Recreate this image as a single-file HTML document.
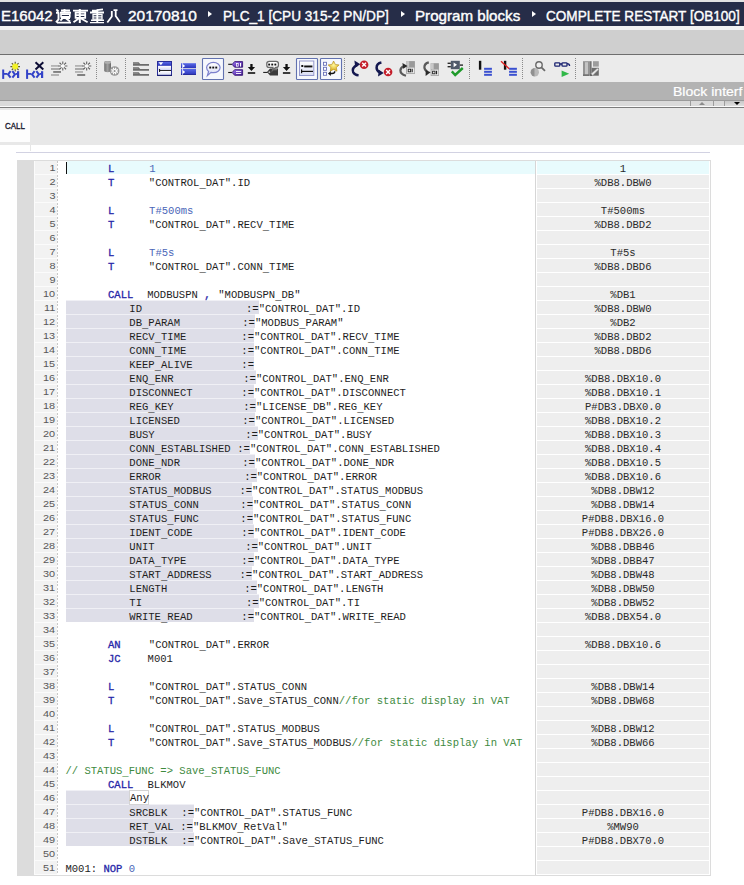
<!DOCTYPE html>
<html><head><meta charset="utf-8">
<style>
*{margin:0;padding:0;box-sizing:border-box}
html,body{width:744px;height:885px;overflow:hidden;background:#fff;position:relative;font-family:"Liberation Sans",sans-serif}
.abs{position:absolute}
#topstrip{position:absolute;left:0;top:0;width:744px;height:2px;background:#e2e2e2}
#title{position:absolute;left:0;top:2px;width:744px;height:24px;background:#262d48;color:#fff}
#title .s{position:absolute;top:5px;font-size:15px;line-height:17px;white-space:pre;transform-origin:0 50%;-webkit-text-stroke:0.4px #fff}
#title .tri{position:absolute;top:9.2px;width:0;height:0;border-top:3.7px solid transparent;border-bottom:3.7px solid transparent;border-left:4.4px solid #fff}
#wstrip{position:absolute;left:0;top:26px;width:744px;height:4px;background:#f2f2f2}
#gbar{position:absolute;left:0;top:30px;width:744px;height:24px;background:#cfcfcf}
#gline{position:absolute;left:0;top:54px;width:744px;height:1px;background:#6e6e6e}
#tb{position:absolute;left:0;top:55px;width:744px;height:27px;background:#ebebeb}
#bibar{position:absolute;left:0;top:82px;width:744px;height:18px;background:#b3b3b3}
#bibar .s{position:absolute;left:673px;top:1px;font-size:13px;line-height:17px;color:#fff;white-space:pre;transform:scaleX(1.08);transform-origin:0 50%;-webkit-text-stroke:0.2px #fff}
#biline{position:absolute;left:0;top:100px;width:744px;height:1px;background:#9a9a9a}
#arrstrip{position:absolute;left:0;top:101px;width:744px;height:5px;background:#dadada}
#wl2{position:absolute;left:0;top:106px;width:744px;height:1px;background:#fafafa}
#dl2{position:absolute;left:0;top:107px;width:744px;height:1px;background:#7c7c7c}
#callarea{position:absolute;left:0;top:108px;width:744px;height:37px;background:#e8e8e8}
#callbox{position:absolute;left:0;top:110px;width:30px;height:32px;background:#fdfdfd}
#callbox span{position:absolute;left:4.8px;top:10.8px;font-size:8.6px;line-height:10px;color:#1c1c30;transform:scaleX(0.92);transform-origin:0 50%;-webkit-text-stroke:0.35px #1c1c30}
#vl1{position:absolute;left:30px;top:145px;width:1px;height:6px;background:#e6e6e6}
#lav{position:absolute;left:16px;top:152px;width:694px;height:1px;background:#d2d2e2}
#ed{position:absolute;left:17px;top:160px;width:694px;height:716px;background:#fff;border:1px solid #dcdcdc}
#gutter{position:absolute;left:17px;top:160px;width:17px;height:716px;background:#dcdcdc}
#lncol{position:absolute;left:34px;top:161px;width:23px;height:714px;background:#fbfbfb}
#dots{position:absolute;left:57px;top:161px;width:1px;height:714px;background:repeating-linear-gradient(to bottom,#c8c8c8 0 2px,transparent 2px 3px,#c8c8c8 3px 5px,transparent 5px 7px)}
#vsep{position:absolute;left:535px;top:161px;width:1px;height:714px;background:#d6d6d6}
.ln{position:absolute;left:34px;width:23px;height:13px;background:#f2f2f2;border-left:1px solid #fbfbfb;font-size:9.9px;line-height:13px;text-align:right;padding-right:1.8px;padding-top:0px;color:#585858}
.ln span{display:inline-block;transform:scaleX(1.1);transform-origin:100% 50%}
.vc{position:absolute;left:537px;width:172px;height:13px;background:#eeeeee;font-family:"Liberation Mono",monospace;font-size:10.55px;line-height:13px;text-align:center;color:#2a2a2a;white-space:pre;padding-top:2px}
.vc.cur{background:#e8fbfd}
#curline{position:absolute;left:67px;top:161px;width:468px;height:13px;background:#e8fbfd}
#caret{position:absolute;left:66px;top:162px;width:1px;height:12px;background:#111}
.band{position:absolute;left:66px;height:14px;background:linear-gradient(#f0f0f5 0 1px,#dedee8 1px)}
.any{position:absolute;left:129px;width:20px;height:15px;background:#fff;border:1px solid #d4d4d4;font-family:"Liberation Mono",monospace;font-size:10.55px;line-height:13px;color:#1a1a1a;padding-left:0px;padding-top:1px}
.t{position:absolute;font-family:"Liberation Mono",monospace;font-size:10.55px;line-height:14px;white-space:pre}
.op{color:#2626a8;-webkit-text-stroke:0.3px #2626a8}
.cst{color:#4a66b8}
.tx{color:#1e1e1e}
.cm{color:#3e8a3e}
.t i{font-style:normal;position:relative;top:2px}
.sep{position:absolute;top:60px;width:1px;height:19px;background:repeating-linear-gradient(to bottom,#a0a0a0 0 1px,transparent 1px 2px)}
.ic{position:absolute;top:58px}
</style></head><body>
<div id="topstrip"></div>
<div id="title">
<div class="s" style="left:1px">E16042</div>
<svg class="abs" style="left:0;top:-2px" width="130" height="26" viewBox="0 0 130 26" fill="none" stroke="#fff" stroke-linecap="butt">
<g stroke-width="1.9">
<path d="M56.3 9.3l2.2 2.2M56 12.8h3.2M58.5 12.8v6.5l-2.5 3M57 22.6h14"/>
<path d="M61 10.5h9M64.5 9v3.5M60 12.7h11M63 17.6l-2.6 3M61 18h9M65.5 18l4.5 3.5"/>
</g>
<rect x="61" y="14.2" width="8.8" height="2.6" stroke-width="1.6"/>
<g stroke-width="1.8">
<path d="M73 10.6h15M75.6 12.6h9.6v5.2h-9.6zM75.6 15.2h9.6M79 18.3l-5.5 4M80.6 18.3l7 4"/>
<path d="M79.8 9v14" stroke-width="2"/>
<path d="M92 10.7h5M97 10.2l6-0.9M90 12.5h14"/>
<path d="M91 20.3h13M90 22.6h14" stroke-width="1.4"/>
<path d="M93 14.5h9v4.6h-9zM93 16.8h9" stroke-width="1.3"/>
<path d="M97.3 9.5v13" stroke-width="1.9"/>
<path d="M111.8 11v5.5l-4.5 6M113.5 10.2h4M115.7 10v6l4.3 6"/>
</g>
</svg>
<div class="s" style="left:128px;transform:scaleX(1.03)">20170810</div>
<div class="tri" style="left:208px"></div>
<div class="s" id="t2" style="left:222.7px;transform:scaleX(0.908)">PLC_1 [CPU 315-2 PN/DP]</div>
<div class="tri" style="left:400.5px"></div>
<div class="s" id="t3" style="left:414.8px;transform:scaleX(1.01)">Program blocks</div>
<div class="tri" style="left:532px"></div>
<div class="s" id="t4" style="left:546px;transform:scaleX(0.904)">COMPLETE RESTART [OB100]</div>
</div>
<div id="wstrip"></div>
<div id="gbar"></div>
<div id="gline"></div>
<div id="tb"></div>
<svg class="abs" style="left:0;top:0" width="744" height="82" viewBox="0 0 744 82">
<defs>
<linearGradient id="gblue" x1="0" y1="0" x2="0" y2="1"><stop offset="0" stop-color="#5a6ae8"/><stop offset="1" stop-color="#2a34b8"/></linearGradient>
<linearGradient id="gcyl" x1="0" y1="0" x2="1" y2="0"><stop offset="0" stop-color="#707070"/><stop offset="0.5" stop-color="#a0a0a0"/><stop offset="1" stop-color="#686868"/></linearGradient>
<linearGradient id="gpanel" x1="0" y1="0" x2="0" y2="1"><stop offset="0" stop-color="#ffffff"/><stop offset="1" stop-color="#d8dcf4"/></linearGradient>
<radialGradient id="gstar" cx="0.5" cy="0.4" r="0.6"><stop offset="0" stop-color="#fff8a0"/><stop offset="1" stop-color="#d8a810"/></radialGradient>
</defs>
<!-- separators -->
<g fill="#8a8a8a">
<path d="M96 58h1v1h-1zM96 60h1v1h-1zM96 62h1v1h-1zM96 64h1v1h-1zM96 66h1v1h-1zM96 68h1v1h-1zM96 70h1v1h-1zM96 72h1v1h-1zM96 74h1v1h-1zM96 76h1v1h-1zM96 78h1v1h-1z"/>
<path d="M125 58h1v1h-1zM125 60h1v1h-1zM125 62h1v1h-1zM125 64h1v1h-1zM125 66h1v1h-1zM125 68h1v1h-1zM125 70h1v1h-1zM125 72h1v1h-1zM125 74h1v1h-1zM125 76h1v1h-1zM125 78h1v1h-1z"/>
<path d="M344 58h1v1h-1zM344 60h1v1h-1zM344 62h1v1h-1zM344 64h1v1h-1zM344 66h1v1h-1zM344 68h1v1h-1zM344 70h1v1h-1zM344 72h1v1h-1zM344 74h1v1h-1zM344 76h1v1h-1zM344 78h1v1h-1z"/>
<path d="M469 58h1v1h-1zM469 60h1v1h-1zM469 62h1v1h-1zM469 64h1v1h-1zM469 66h1v1h-1zM469 68h1v1h-1zM469 70h1v1h-1zM469 72h1v1h-1zM469 74h1v1h-1zM469 76h1v1h-1zM469 78h1v1h-1z"/>
<path d="M522 58h1v1h-1zM522 60h1v1h-1zM522 62h1v1h-1zM522 64h1v1h-1zM522 66h1v1h-1zM522 68h1v1h-1zM522 70h1v1h-1zM522 72h1v1h-1zM522 74h1v1h-1zM522 76h1v1h-1zM522 78h1v1h-1z"/>
<path d="M575 58h1v1h-1zM575 60h1v1h-1zM575 62h1v1h-1zM575 64h1v1h-1zM575 66h1v1h-1zM575 68h1v1h-1zM575 70h1v1h-1zM575 72h1v1h-1zM575 74h1v1h-1zM575 76h1v1h-1zM575 78h1v1h-1z"/>
</g>
<!-- 1: insert network -->
<g fill="#3242c8">
<rect x="2.2" y="69.5" width="2" height="9.4"/><rect x="4" y="73" width="3.4" height="1.8"/>
<path d="M10.6 71.2L8.1 74.4L10.6 77.6M12.4 71.2L14.9 74.4L12.4 77.6" fill="none" stroke="#3242c8" stroke-width="2"/>
<rect x="15.6" y="73" width="1.6" height="1.8"/><rect x="17" y="71.2" width="2.2" height="6.8"/>
</g>
<g stroke="#5a5a28" stroke-width="1.1"><path d="M15.2 61.8v9.6M10.4 66.6h9.6M11.8 63.2l6.8 6.8M18.6 63.2l-6.8 6.8"/></g>
<circle cx="15.2" cy="66.6" r="3" fill="#f2f226"/>
<!-- 2: delete network -->
<g fill="#3242c8">
<rect x="26.1" y="69.5" width="2" height="9.4"/><rect x="28" y="73" width="3.4" height="1.8"/>
<path d="M34.6 71.2L32.1 74.4L34.6 77.6M36.4 71.2L38.9 74.4L36.4 77.6" fill="none" stroke="#3242c8" stroke-width="2"/>
<rect x="39.6" y="73" width="1.6" height="1.8"/><rect x="41" y="71.2" width="2.2" height="6.8"/>
</g>
<path d="M35.5 62.3l7.8 7.2M43.3 62.3l-7.8 7.2" stroke="#0c0c34" stroke-width="2"/>
<!-- 3,4: grey bars with sparkle -->
<g>
<rect x="51" y="65" width="7.5" height="1.8" fill="#b4b4b4"/><rect x="51" y="68" width="9" height="2" fill="#aaaaaa"/>
<rect x="53.2" y="71" width="7.8" height="1.9" fill="#808080"/><rect x="51" y="74" width="8" height="2" fill="#b4b4b4"/>
<circle cx="62.8" cy="66" r="3.6" fill="#fafafa"/><path d="M64.60 66.00L67.40 66.00M64.07 67.27L66.05 69.25M62.80 67.80L62.80 70.60M61.53 67.27L59.55 69.25M61.00 66.00L58.20 66.00M61.53 64.73L59.55 62.75M62.80 64.20L62.80 61.40M64.07 64.73L66.05 62.75" stroke="#5e5e5e" stroke-width="1.1"/>
<rect x="75" y="65" width="7.5" height="1.8" fill="#b4b4b4"/><rect x="75" y="68" width="9" height="2" fill="#aaaaaa"/>
<rect x="75" y="71" width="8" height="1.9" fill="#b4b4b4"/><rect x="77.2" y="74" width="8" height="2" fill="#808080"/>
<circle cx="86.7" cy="66" r="3.6" fill="#fafafa"/><path d="M88.50 66.00L91.30 66.00M87.97 67.27L89.95 69.25M86.70 67.80L86.70 70.60M85.43 67.27L83.45 69.25M84.90 66.00L82.10 66.00M85.43 64.73L83.45 62.75M86.70 64.20L86.70 61.40M87.97 64.73L89.95 62.75" stroke="#5e5e5e" stroke-width="1.1"/>
</g>
<!-- 5: cylinder with gear -->
<path d="M104.2 62.5a3.4 1.4 0 0 1 6.8 0v8.3a3.4 1.4 0 0 1 -6.8 0z" fill="url(#gcyl)"/>
<ellipse cx="107.6" cy="62.5" rx="3.4" ry="1.3" fill="#b0b0b0"/>
<circle cx="114.6" cy="71" r="4.8" fill="#969696"/>
<path d="M115.52 71.38L117.93 72.38M114.98 71.92L115.98 74.33M114.22 71.92L113.22 74.33M113.68 71.38L111.27 72.38M113.68 70.62L111.27 69.62M114.22 70.08L113.22 67.67M114.98 70.08L115.98 67.67M115.52 70.62L117.93 69.62" stroke="#fff" stroke-width="1.1"/>
<!-- 6: stacked tab bars -->
<g fill="#6c6c6c">
<path d="M133 62.2h5.6l1.6 1.9h8.8v1.6h-16z"/>
<path d="M133 67.2h5.6l1.6 1.9h8.8v1.6h-16z"/>
<path d="M133 72.2h5.6l1.6 1.9h8.8v1.6h-16z"/>
</g>
<g fill="#8c8c8c"><rect x="133" y="62.2" width="5.4" height="1.6"/><rect x="133" y="67.2" width="5.4" height="1.6"/><rect x="133" y="72.2" width="5.4" height="1.6"/></g>
<!-- 7: blue box with line -->
<rect x="157.5" y="61.5" width="14" height="14" fill="#eef0fc" stroke="#2a2e98" stroke-width="1"/>
<rect x="158" y="62" width="13" height="3.8" fill="url(#gblue)"/>
<path d="M158.6 62.3h4.6l-2.3 2.9z" fill="#fff"/>
<rect x="158" y="66" width="13" height="3.4" fill="url(#gpanel)"/>
<rect x="158" y="71" width="13" height="4" fill="url(#gpanel)"/>
<rect x="158" y="69.4" width="13" height="0.6" fill="#c8ccf0"/>
<rect x="159.6" y="70.1" width="11.4" height="0.9" fill="#111"/><rect x="159.1" y="69" width="1" height="3" fill="#111"/>
<rect x="157.5" y="74.8" width="14.5" height="1.2" fill="#1c2070"/>
<!-- 8: blue double bars -->
<rect x="181" y="63.2" width="15" height="5" fill="url(#gblue)"/>
<rect x="181" y="69" width="15" height="5.8" fill="url(#gblue)"/>
<rect x="181" y="74" width="15" height="0.8" fill="#1e2290"/>
<rect x="182.2" y="63.2" width="0.8" height="11.6" fill="#e8ecff"/>
<path d="M183 64.2l2.2 1.7-2.2 1.7zM183 70.3l2.2 1.7-2.2 1.7z" fill="#fff"/>
<!-- 9: comment (selected) -->
<rect x="202.5" y="58.5" width="21" height="21" rx="0.8" fill="#f6f8fd" stroke="#6272b0" stroke-width="1.1"/>
<path d="M213.4 62.4c3.8 0 6.7 2.3 6.7 5.2s-2.9 5.1-6.7 5.1c-0.8 0-1.6-0.1-2.4-0.3l-3.6 3.2 1.2-4.1c-1.3-1-2-2.3-2-3.9 0-2.9 3-5.2 6.8-5.2z" fill="url(#gpanel)" stroke="#7c80cc" stroke-width="1.2"/>
<g fill="#111"><rect x="209.3" y="66.6" width="1.9" height="1.9"/><rect x="212.3" y="66.6" width="1.9" height="1.9"/><rect x="215.3" y="66.6" width="1.9" height="1.9"/></g>
<!-- 10: purple tags -->
<defs><linearGradient id="gpur" x1="0" y1="0" x2="1" y2="1"><stop offset="0" stop-color="#a080f0"/><stop offset="0.6" stop-color="#6438b8"/><stop offset="1" stop-color="#3a1a80"/></linearGradient></defs>
<g>
<path d="M228.2 64.3h4" stroke="#111" stroke-width="1.1"/>
<path d="M234.6 61.6h8v5.6h-8l-2.4-2.8z" fill="url(#gpur)" stroke="#3a1876" stroke-width="0.9"/>
<rect x="236" y="63" width="2.6" height="3.6" fill="#fff"/><rect x="236.8" y="63.8" width="1" height="2" fill="#5a30a8"/>
<rect x="240" y="63" width="1.1" height="3.6" fill="#fff"/>
<path d="M228.2 72.5h4" stroke="#111" stroke-width="1.1"/>
<path d="M234.6 69.7h8v5.6h-8l-2.4-2.8z" fill="url(#gpur)" stroke="#3a1876" stroke-width="0.9"/>
<rect x="236" y="71.1" width="5.2" height="0.9" fill="#fff"/><rect x="236" y="73" width="5.2" height="0.9" fill="#fff"/>
</g>
<!-- download arrows -->
<g fill="#111">
<path d="M250.3 64h2.3v3h2.5l-3.65 3.9-3.65-3.9h2.5z"/><rect x="247.8" y="72.2" width="7.4" height="1.6"/>
<path d="M285.4 64h2.3v3h2.5l-3.65 3.9-3.65-3.9h2.5z"/><rect x="282.9" y="72.2" width="7.4" height="1.6"/>
</g>
<!-- 11: black bubble + tag -->
<path d="M263.2 72.4h4.6" stroke="#111" stroke-width="1"/>
<path d="M270 68.6h8v7h-8l-3-3.5z" fill="#3a3a3a"/>
<rect x="273.5" y="69.3" width="3.6" height="0.9" fill="#8a8a8a"/>
<circle cx="269.4" cy="72.2" r="0.9" fill="#c0c0c0"/>
<path d="M269.4 61.4h6.6c1.5 0 2.4 0.9 2.4 2.2v1.6c0 1.3-0.9 2.2-2.4 2.2h-0.4l-3.2 3.1 0.6-3.1h-3.6c-1.5 0-2.6-0.9-2.6-2.2v-1.6c0-1.3 1.1-2.2 2.6-2.2z" fill="#fff" stroke="#6a6a6a" stroke-width="1.3"/>
<g fill="#111"><rect x="268.2" y="63.6" width="1.9" height="1.9"/><rect x="271.3" y="63.6" width="1.9" height="1.9"/><rect x="274.4" y="63.6" width="1.9" height="1.9"/></g>
<!-- 12: list (selected) -->
<rect x="296.5" y="58.5" width="21" height="21" rx="0.8" fill="#f6f8fd" stroke="#6272b0" stroke-width="1.1"/>
<rect x="299.5" y="61" width="14.3" height="14.5" fill="url(#gpanel)" stroke="#9498cc" stroke-width="1"/>
<rect x="301.3" y="65" width="2" height="2" fill="#111"/><rect x="304.2" y="65.5" width="8.2" height="1.9" fill="#111"/>
<rect x="301.6" y="70.8" width="11.4" height="1.2" fill="#111"/><rect x="301" y="69.4" width="1.2" height="3.8" fill="#111"/>
<!-- 13: star list (selected) -->
<rect x="320.5" y="58.5" width="21" height="21" rx="0.8" fill="#f6f8fd" stroke="#6272b0" stroke-width="1.1"/>
<g fill="#fff" stroke="#6870b8" stroke-width="0.9"><rect x="323.5" y="62.3" width="3" height="3"/><rect x="323.5" y="67.3" width="3" height="3"/><rect x="323.5" y="72.3" width="3" height="3"/></g>
<path d="M333.6 61l1.7 3.4 3.8 0.5-2.75 2.6 0.65 3.7-3.4-1.8-3.4 1.8 0.65-3.7-2.75-2.6 3.8-0.5z" fill="url(#gstar)" stroke="#b08818" stroke-width="0.6"/>
<path d="M334.8 71.2c0 1.6-1 2.3-2.8 2.3h-2" fill="none" stroke="#111" stroke-width="1.4"/>
<path d="M328 73.5l2.8-2.4v4.8z" fill="#111"/>
<!-- 14,15: navy arrows with red x -->
<path d="M357.4 64.8C353.6 66.6 352.2 69.6 353.2 72.2C354 74 355.8 75 358.6 75.4" fill="none" stroke="#141850" stroke-width="2.4"/>
<path d="M354.4 60.6l6 3.6-5.2 3.4z" fill="#141850"/>
<circle cx="364.1" cy="64.7" r="4.3" fill="#c41e2a"/>
<path d="M362.2 62.8l3.8 3.8M366 62.8l-3.8 3.8" stroke="#fff" stroke-width="1.4"/>
<path d="M381.4 62.6c-3 0.6-4.8 2.8-4.8 5.2 0 2 1.2 3.6 3.2 4.6" fill="none" stroke="#141850" stroke-width="2.5"/>
<path d="M378 76.5l5.8-3.6-5-3.2z" fill="#141850"/>
<circle cx="388.1" cy="72" r="4.3" fill="#c41e2a"/>
<path d="M386.2 70.1l3.8 3.8M390 70.1l-3.8 3.8" stroke="#fff" stroke-width="1.4"/>
<!-- 16,17: grey arrows with page -->
<rect x="406.2" y="61.1" width="8.7" height="12.8" fill="#9a9a9a"/>
<rect x="406.2" y="61.1" width="3" height="6" fill="#c8c8c8"/>
<rect x="407" y="67.6" width="7.3" height="5.6" fill="#e8e8e8"/>
<rect x="408.2" y="69.2" width="2.4" height="2.6" fill="none" stroke="#222" stroke-width="0.9"/><rect x="411.6" y="68.8" width="1.1" height="3.4" fill="#222"/>
<path d="M404.2 66c-2.4 1-3.8 2.6-3.8 4.6 0 2.3 1.8 4.2 5.6 5.2" fill="none" stroke="#5a5a5a" stroke-width="2.2"/>
<path d="M402.4 63l5.2 3-4.4 2.8z" fill="#2a2a2a"/>
<rect x="430.7" y="63.2" width="8.2" height="12.7" fill="#9a9a9a"/>
<rect x="430.7" y="63.2" width="3" height="6" fill="#c8c8c8"/>
<rect x="431.5" y="69.6" width="6.8" height="5.6" fill="#e8e8e8"/>
<rect x="432.6" y="71.2" width="2.4" height="2.6" fill="none" stroke="#222" stroke-width="0.9"/><rect x="436" y="70.8" width="1.1" height="3.4" fill="#222"/>
<path d="M428.8 62.4c-2.8 0.7-4.4 2.6-4.4 4.8 0 1.8 1 3.2 2.8 4.2" fill="none" stroke="#5a5a5a" stroke-width="2.2"/>
<path d="M425.6 76l5-3.8-5-2.2z" fill="#2a2a2a"/>
<!-- 18: block with check -->
<rect x="450.8" y="60.8" width="9" height="8.4" fill="#505a6a"/>
<rect x="447.6" y="62.6" width="3.2" height="1.4" fill="#2a2a2a"/><rect x="447.6" y="66" width="3.2" height="1.4" fill="#2a2a2a"/>
<rect x="459.8" y="64.4" width="3.2" height="1.4" fill="#2a2a2a"/>
<path d="M453.6 62.4l3.4 2.4-3.4 2.4z" fill="#fff"/>
<path d="M451.8 71.4l3.4 3.6 7.6-7" fill="none" stroke="#1e9a2a" stroke-width="2.4"/>
<!-- 19, 20: bar + blue lines -->
<rect x="478.9" y="60.8" width="2.4" height="8.9" fill="#111"/>
<g fill="#3a50d0"><rect x="484.1" y="67.8" width="7.8" height="2"/><rect x="484.1" y="70.8" width="7.8" height="2"/><rect x="484.1" y="73.8" width="7.8" height="2"/></g>
<rect x="503.9" y="60.8" width="2.4" height="8.9" fill="#111"/>
<g fill="#3a50d0"><rect x="509.1" y="67.8" width="7.8" height="2"/><rect x="509.1" y="70.8" width="7.8" height="2"/><rect x="509.1" y="73.8" width="7.8" height="2"/></g>
<path d="M501 61.2l8.2 7.6" stroke="#e02020" stroke-width="1.3"/>
<!-- 21: magnifier -->
<path d="M534.8 68a4.2 4.2 0 0 0 0 8.4z" fill="#909090"/>
<path d="M534.8 68a4.2 4.2 0 0 1 0 8.4z" fill="#b8b8b8"/>
<circle cx="539" cy="65" r="3.2" fill="#f0f0f0" stroke="#6a6a6a" stroke-width="1.4"/>
<path d="M541.4 67.4l3.6 3.4" stroke="#6a6a6a" stroke-width="1.8"/>
<!-- 22: glasses + green arrow -->
<g fill="none" stroke="#1a2270" stroke-width="1.3"><rect x="554.8" y="62.8" width="5" height="3.4" rx="0.8"/><rect x="562" y="62.8" width="5" height="3.4" rx="0.8"/><path d="M559.8 64h2.2M567 63.6c1.8 0 2.6 1 2.6 2.4"/></g>
<path d="M561.6 70.5l7.6 3.2-7.6 3.3z" fill="#30b848"/>
<!-- 23: grey block with pencil -->
<rect x="583" y="61.2" width="6.4" height="14.5" fill="#939393"/>
<rect x="585" y="62.2" width="3" height="12.2" fill="#c4c4c4"/>
<rect x="583" y="74.6" width="6.4" height="1.1" fill="#5a5a5a"/>
<rect x="589.4" y="61.2" width="2.2" height="14.5" fill="#727272"/>
<rect x="593" y="61.2" width="5.8" height="5.4" fill="#9c9c9c"/>
<path d="M591.6 67.8h7.2v7.9h-7.2z" fill="#6c6c6c"/>
<path d="M597.4 68.2l1.4 1.4-5.8 5.6-2.6 0.6 0.8-2.4z" fill="#e6e6e6" stroke="#888" stroke-width="0.5"/>
<rect x="590.4" y="74.4" width="1.3" height="1.3" fill="#222"/>
</svg>

<div id="bibar"><span class="s">Block interf</span></div>
<div id="biline"></div>
<div id="arrstrip">
<div class="abs" style="left:690px;top:0;width:1px;height:5px;background:#9c9c9c"></div>
<div class="abs" style="left:699px;top:1px;width:0;height:0;border-left:3.5px solid transparent;border-right:3.5px solid transparent;border-bottom:3px solid #8c8c8c"></div>
<div class="abs" style="left:713px;top:0;width:1px;height:5px;background:#9c9c9c"></div>
<div class="abs" style="left:724px;top:0;width:1px;height:5px;background:#9c9c9c"></div>
<div class="abs" style="left:725px;top:0;width:19px;height:5px;background:linear-gradient(#c8c8c8,#dedede)"></div>
<div class="abs" style="left:733.5px;top:1px;width:0;height:0;border-left:3px solid transparent;border-right:3px solid transparent;border-top:3.6px solid #000"></div>
</div>
<div id="wl2"></div>
<div id="dl2"></div>
<div id="callarea"></div>
<div id="callbox"><span>CALL</span></div>
<div id="vl1"></div>
<div id="lav"></div>
<div id="ed"></div>
<div id="gutter"></div>
<div id="lncol"></div>
<div id="dots"></div>
<div id="vsep"></div>
<div id="curline"></div>
<div class="ln" style="top:161px"><span>1</span></div>
<div class="vc cur" style="top:161px">1</div>
<div class="ln" style="top:175px"><span>2</span></div>
<div class="vc" style="top:175px">%DB8.DBW0</div>
<div class="ln" style="top:189px"><span>3</span></div>
<div class="vc" style="top:189px"></div>
<div class="ln" style="top:203px"><span>4</span></div>
<div class="vc" style="top:203px">T#500ms</div>
<div class="ln" style="top:217px"><span>5</span></div>
<div class="vc" style="top:217px">%DB8.DBD2</div>
<div class="ln" style="top:231px"><span>6</span></div>
<div class="vc" style="top:231px"></div>
<div class="ln" style="top:245px"><span>7</span></div>
<div class="vc" style="top:245px">T#5s</div>
<div class="ln" style="top:259px"><span>8</span></div>
<div class="vc" style="top:259px">%DB8.DBD6</div>
<div class="ln" style="top:273px"><span>9</span></div>
<div class="vc" style="top:273px"></div>
<div class="ln" style="top:287px"><span>10</span></div>
<div class="vc" style="top:287px">%DB1</div>
<div class="ln" style="top:301px"><span>11</span></div>
<div class="vc" style="top:301px">%DB8.DBW0</div>
<div class="ln" style="top:315px"><span>12</span></div>
<div class="vc" style="top:315px">%DB2</div>
<div class="ln" style="top:329px"><span>13</span></div>
<div class="vc" style="top:329px">%DB8.DBD2</div>
<div class="ln" style="top:343px"><span>14</span></div>
<div class="vc" style="top:343px">%DB8.DBD6</div>
<div class="ln" style="top:357px"><span>15</span></div>
<div class="vc" style="top:357px"></div>
<div class="ln" style="top:371px"><span>16</span></div>
<div class="vc" style="top:371px">%DB8.DBX10.0</div>
<div class="ln" style="top:385px"><span>17</span></div>
<div class="vc" style="top:385px">%DB8.DBX10.1</div>
<div class="ln" style="top:399px"><span>18</span></div>
<div class="vc" style="top:399px">P#DB3.DBX0.0</div>
<div class="ln" style="top:413px"><span>19</span></div>
<div class="vc" style="top:413px">%DB8.DBX10.2</div>
<div class="ln" style="top:427px"><span>20</span></div>
<div class="vc" style="top:427px">%DB8.DBX10.3</div>
<div class="ln" style="top:441px"><span>21</span></div>
<div class="vc" style="top:441px">%DB8.DBX10.4</div>
<div class="ln" style="top:455px"><span>22</span></div>
<div class="vc" style="top:455px">%DB8.DBX10.5</div>
<div class="ln" style="top:469px"><span>23</span></div>
<div class="vc" style="top:469px">%DB8.DBX10.6</div>
<div class="ln" style="top:483px"><span>24</span></div>
<div class="vc" style="top:483px">%DB8.DBW12</div>
<div class="ln" style="top:497px"><span>25</span></div>
<div class="vc" style="top:497px">%DB8.DBW14</div>
<div class="ln" style="top:511px"><span>26</span></div>
<div class="vc" style="top:511px">P#DB8.DBX16.0</div>
<div class="ln" style="top:525px"><span>27</span></div>
<div class="vc" style="top:525px">P#DB8.DBX26.0</div>
<div class="ln" style="top:539px"><span>28</span></div>
<div class="vc" style="top:539px">%DB8.DBB46</div>
<div class="ln" style="top:553px"><span>29</span></div>
<div class="vc" style="top:553px">%DB8.DBB47</div>
<div class="ln" style="top:567px"><span>30</span></div>
<div class="vc" style="top:567px">%DB8.DBW48</div>
<div class="ln" style="top:581px"><span>31</span></div>
<div class="vc" style="top:581px">%DB8.DBW50</div>
<div class="ln" style="top:595px"><span>32</span></div>
<div class="vc" style="top:595px">%DB8.DBW52</div>
<div class="ln" style="top:609px"><span>33</span></div>
<div class="vc" style="top:609px">%DB8.DBX54.0</div>
<div class="ln" style="top:623px"><span>34</span></div>
<div class="vc" style="top:623px"></div>
<div class="ln" style="top:637px"><span>35</span></div>
<div class="vc" style="top:637px">%DB8.DBX10.6</div>
<div class="ln" style="top:651px"><span>36</span></div>
<div class="vc" style="top:651px"></div>
<div class="ln" style="top:665px"><span>37</span></div>
<div class="vc" style="top:665px"></div>
<div class="ln" style="top:679px"><span>38</span></div>
<div class="vc" style="top:679px">%DB8.DBW14</div>
<div class="ln" style="top:693px"><span>39</span></div>
<div class="vc" style="top:693px">%DB8.DBW68</div>
<div class="ln" style="top:707px"><span>40</span></div>
<div class="vc" style="top:707px"></div>
<div class="ln" style="top:721px"><span>41</span></div>
<div class="vc" style="top:721px">%DB8.DBW12</div>
<div class="ln" style="top:735px"><span>42</span></div>
<div class="vc" style="top:735px">%DB8.DBW66</div>
<div class="ln" style="top:749px"><span>43</span></div>
<div class="vc" style="top:749px"></div>
<div class="ln" style="top:763px"><span>44</span></div>
<div class="vc" style="top:763px"></div>
<div class="ln" style="top:777px"><span>45</span></div>
<div class="vc" style="top:777px"></div>
<div class="ln" style="top:791px"><span>46</span></div>
<div class="vc" style="top:791px"></div>
<div class="ln" style="top:805px"><span>47</span></div>
<div class="vc" style="top:805px">P#DB8.DBX16.0</div>
<div class="ln" style="top:819px"><span>48</span></div>
<div class="vc" style="top:819px">%MW90</div>
<div class="ln" style="top:833px"><span>49</span></div>
<div class="vc" style="top:833px">P#DB8.DBX70.0</div>
<div class="ln" style="top:847px"><span>50</span></div>
<div class="vc" style="top:847px"></div>
<div class="ln" style="top:861px"><span>51</span></div>
<div class="vc" style="top:861px"></div>
<div class="band" style="top:300px;width:192.7px"></div>
<div class="band" style="top:314px;width:188.9px"></div>
<div class="band" style="top:328px;width:188.0px"></div>
<div class="band" style="top:342px;width:188.0px"></div>
<div class="band" style="top:356px;width:188.0px"></div>
<div class="band" style="top:370px;width:189.9px"></div>
<div class="band" style="top:384px;width:188.0px"></div>
<div class="band" style="top:398px;width:189.9px"></div>
<div class="band" style="top:412px;width:188.9px"></div>
<div class="band" style="top:426px;width:191.8px"></div>
<div class="band" style="top:440px;width:183.9px"></div>
<div class="band" style="top:454px;width:188.9px"></div>
<div class="band" style="top:468px;width:190.8px"></div>
<div class="band" style="top:482px;width:186.1px"></div>
<div class="band" style="top:496px;width:187.0px"></div>
<div class="band" style="top:510px;width:187.0px"></div>
<div class="band" style="top:524px;width:188.0px"></div>
<div class="band" style="top:538px;width:191.8px"></div>
<div class="band" style="top:552px;width:188.0px"></div>
<div class="band" style="top:566px;width:186.1px"></div>
<div class="band" style="top:580px;width:190.8px"></div>
<div class="band" style="top:594px;width:192.7px"></div>
<div class="band" style="top:608px;width:188.0px"></div>
<div class="band" style="top:804px;width:128.0px"></div>
<div class="band" style="top:818px;width:126.9px"></div>
<div class="band" style="top:832px;width:128.0px"></div>
<div class="band" style="top:790px;width:63.3px"></div>
<div class="any" style="top:790px">Any</div>
<div class="t" style="left:108.00px;top:162px"><span class="op">L</span></div>
<div class="t" style="left:149.30px;top:162px"><span class="cst">1</span></div>
<div class="t" style="left:108.00px;top:176px"><span class="op">T</span></div>
<div class="t" style="left:148.80px;top:176px"><span class="tx">&quot;CONTROL<i>_</i>DAT&quot;.ID</span></div>
<div class="t" style="left:108.00px;top:204px"><span class="op">L</span></div>
<div class="t" style="left:149.10px;top:204px"><span class="cst">T#500ms</span></div>
<div class="t" style="left:108.00px;top:218px"><span class="op">T</span></div>
<div class="t" style="left:148.80px;top:218px"><span class="tx">&quot;CONTROL<i>_</i>DAT&quot;.RECV<i>_</i>TIME</span></div>
<div class="t" style="left:108.00px;top:246px"><span class="op">L</span></div>
<div class="t" style="left:149.10px;top:246px"><span class="cst">T#5s</span></div>
<div class="t" style="left:108.00px;top:260px"><span class="op">T</span></div>
<div class="t" style="left:148.80px;top:260px"><span class="tx">&quot;CONTROL<i>_</i>DAT&quot;.CONN<i>_</i>TIME</span></div>
<div class="t" style="left:108.00px;top:288px"><span class="op">CALL</span></div>
<div class="t" style="left:147.20px;top:288px"><span class="tx">MODBUSPN</span><span class="op"> , </span></div>
<div class="t" style="left:218.22px;top:288px"><span class="tx">&quot;MODBUSPN<i>_</i>DB&quot;</span></div>
<div class="t" style="left:129.30px;top:302px"><span class="tx">ID</span></div>
<div class="t" style="left:246.04px;top:302px"><span class="tx">:=&quot;CONTROL<i>_</i>DAT&quot;.ID</span></div>
<div class="t" style="left:129.30px;top:316px"><span class="tx">DB<i>_</i>PARAM</span></div>
<div class="t" style="left:242.24px;top:316px"><span class="tx">:=&quot;MODBUS<i>_</i>PARAM&quot;</span></div>
<div class="t" style="left:129.30px;top:330px"><span class="tx">RECV<i>_</i>TIME</span></div>
<div class="t" style="left:241.34px;top:330px"><span class="tx">:=&quot;CONTROL<i>_</i>DAT&quot;.RECV<i>_</i>TIME</span></div>
<div class="t" style="left:129.30px;top:344px"><span class="tx">CONN<i>_</i>TIME</span></div>
<div class="t" style="left:241.34px;top:344px"><span class="tx">:=&quot;CONTROL<i>_</i>DAT&quot;.CONN<i>_</i>TIME</span></div>
<div class="t" style="left:129.30px;top:358px"><span class="tx">KEEP<i>_</i>ALIVE</span></div>
<div class="t" style="left:241.34px;top:358px"><span class="tx">:=</span></div>
<div class="t" style="left:129.30px;top:372px"><span class="tx">ENQ<i>_</i>ENR</span></div>
<div class="t" style="left:243.24px;top:372px"><span class="tx">:=&quot;CONTROL<i>_</i>DAT&quot;.ENQ<i>_</i>ENR</span></div>
<div class="t" style="left:129.30px;top:386px"><span class="tx">DISCONNECT</span></div>
<div class="t" style="left:241.34px;top:386px"><span class="tx">:=&quot;CONTROL<i>_</i>DAT&quot;.DISCONNECT</span></div>
<div class="t" style="left:129.30px;top:400px"><span class="tx">REG<i>_</i>KEY</span></div>
<div class="t" style="left:243.24px;top:400px"><span class="tx">:=&quot;LICENSE<i>_</i>DB&quot;.REG<i>_</i>KEY</span></div>
<div class="t" style="left:129.30px;top:414px"><span class="tx">LICENSED</span></div>
<div class="t" style="left:242.24px;top:414px"><span class="tx">:=&quot;CONTROL<i>_</i>DAT&quot;.LICENSED</span></div>
<div class="t" style="left:129.30px;top:428px"><span class="tx">BUSY</span></div>
<div class="t" style="left:245.14px;top:428px"><span class="tx">:=&quot;CONTROL<i>_</i>DAT&quot;.BUSY</span></div>
<div class="t" style="left:129.30px;top:442px"><span class="tx">CONN<i>_</i>ESTABLISHED</span></div>
<div class="t" style="left:237.24px;top:442px"><span class="tx">:=&quot;CONTROL<i>_</i>DAT&quot;.CONN<i>_</i>ESTABLISHED</span></div>
<div class="t" style="left:129.30px;top:456px"><span class="tx">DONE<i>_</i>NDR</span></div>
<div class="t" style="left:242.24px;top:456px"><span class="tx">:=&quot;CONTROL<i>_</i>DAT&quot;.DONE<i>_</i>NDR</span></div>
<div class="t" style="left:129.30px;top:470px"><span class="tx">ERROR</span></div>
<div class="t" style="left:244.14px;top:470px"><span class="tx">:=&quot;CONTROL<i>_</i>DAT&quot;.ERROR</span></div>
<div class="t" style="left:129.30px;top:484px"><span class="tx">STATUS<i>_</i>MODBUS</span></div>
<div class="t" style="left:239.44px;top:484px"><span class="tx">:=&quot;CONTROL<i>_</i>DAT&quot;.STATUS<i>_</i>MODBUS</span></div>
<div class="t" style="left:129.30px;top:498px"><span class="tx">STATUS<i>_</i>CONN</span></div>
<div class="t" style="left:240.34px;top:498px"><span class="tx">:=&quot;CONTROL<i>_</i>DAT&quot;.STATUS<i>_</i>CONN</span></div>
<div class="t" style="left:129.30px;top:512px"><span class="tx">STATUS<i>_</i>FUNC</span></div>
<div class="t" style="left:240.34px;top:512px"><span class="tx">:=&quot;CONTROL<i>_</i>DAT&quot;.STATUS<i>_</i>FUNC</span></div>
<div class="t" style="left:129.30px;top:526px"><span class="tx">IDENT<i>_</i>CODE</span></div>
<div class="t" style="left:241.34px;top:526px"><span class="tx">:=&quot;CONTROL<i>_</i>DAT&quot;.IDENT<i>_</i>CODE</span></div>
<div class="t" style="left:129.30px;top:540px"><span class="tx">UNIT</span></div>
<div class="t" style="left:245.14px;top:540px"><span class="tx">:=&quot;CONTROL<i>_</i>DAT&quot;.UNIT</span></div>
<div class="t" style="left:129.30px;top:554px"><span class="tx">DATA<i>_</i>TYPE</span></div>
<div class="t" style="left:241.34px;top:554px"><span class="tx">:=&quot;CONTROL<i>_</i>DAT&quot;.DATA<i>_</i>TYPE</span></div>
<div class="t" style="left:129.30px;top:568px"><span class="tx">START<i>_</i>ADDRESS</span></div>
<div class="t" style="left:239.44px;top:568px"><span class="tx">:=&quot;CONTROL<i>_</i>DAT&quot;.START<i>_</i>ADDRESS</span></div>
<div class="t" style="left:129.30px;top:582px"><span class="tx">LENGTH</span></div>
<div class="t" style="left:244.14px;top:582px"><span class="tx">:=&quot;CONTROL<i>_</i>DAT&quot;.LENGTH</span></div>
<div class="t" style="left:129.30px;top:596px"><span class="tx">TI</span></div>
<div class="t" style="left:246.04px;top:596px"><span class="tx">:=&quot;CONTROL<i>_</i>DAT&quot;.TI</span></div>
<div class="t" style="left:129.30px;top:610px"><span class="tx">WRITE<i>_</i>READ</span></div>
<div class="t" style="left:241.34px;top:610px"><span class="tx">:=&quot;CONTROL<i>_</i>DAT&quot;.WRITE<i>_</i>READ</span></div>
<div class="t" style="left:129.30px;top:806px"><span class="tx">SRCBLK</span></div>
<div class="t" style="left:181.34px;top:806px"><span class="tx">:=&quot;CONTROL<i>_</i>DAT&quot;.STATUS<i>_</i>FUNC</span></div>
<div class="t" style="left:129.30px;top:820px"><span class="tx">RET<i>_</i>VAL</span></div>
<div class="t" style="left:180.24px;top:820px"><span class="tx">:=&quot;BLKMOV<i>_</i>RetVal&quot;</span></div>
<div class="t" style="left:129.30px;top:834px"><span class="tx">DSTBLK</span></div>
<div class="t" style="left:181.34px;top:834px"><span class="tx">:=&quot;CONTROL<i>_</i>DAT&quot;.Save<i>_</i>STATUS<i>_</i>FUNC</span></div>
<div class="t" style="left:108.00px;top:638px"><span class="op">AN</span></div>
<div class="t" style="left:148.80px;top:638px"><span class="tx">&quot;CONTROL<i>_</i>DAT&quot;.ERROR</span></div>
<div class="t" style="left:108.00px;top:652px"><span class="op">JC</span></div>
<div class="t" style="left:147.60px;top:652px"><span class="tx">M001</span></div>
<div class="t" style="left:108.00px;top:680px"><span class="op">L</span></div>
<div class="t" style="left:148.80px;top:680px"><span class="tx">&quot;CONTROL<i>_</i>DAT&quot;.STATUS<i>_</i>CONN</span></div>
<div class="t" style="left:108.00px;top:694px"><span class="op">T</span></div>
<div class="t" style="left:148.80px;top:694px"><span class="tx">&quot;CONTROL<i>_</i>DAT&quot;.Save<i>_</i>STATUS<i>_</i>CONN</span><span class="cm">//for static display in VAT</span></div>
<div class="t" style="left:108.00px;top:722px"><span class="op">L</span></div>
<div class="t" style="left:148.80px;top:722px"><span class="tx">&quot;CONTROL<i>_</i>DAT&quot;.STATUS<i>_</i>MODBUS</span></div>
<div class="t" style="left:108.00px;top:736px"><span class="op">T</span></div>
<div class="t" style="left:148.80px;top:736px"><span class="tx">&quot;CONTROL<i>_</i>DAT&quot;.Save<i>_</i>STATUS<i>_</i>MODBUS</span><span class="cm">//for static display in VAT</span></div>
<div class="t" style="left:65.40px;top:764px"><span class="cm">// STATUS<i>_</i>FUNC =&gt; Save<i>_</i>STATUS<i>_</i>FUNC</span></div>
<div class="t" style="left:108.00px;top:778px"><span class="op">CALL</span></div>
<div class="t" style="left:147.50px;top:778px"><span class="tx">BLKMOV</span></div>
<div class="t" style="left:65.40px;top:862px"><span class="tx">M001: </span><span class="op">NOP</span><span class="cst"> 0</span></div>
<div id="caret"></div>
</body></html>
